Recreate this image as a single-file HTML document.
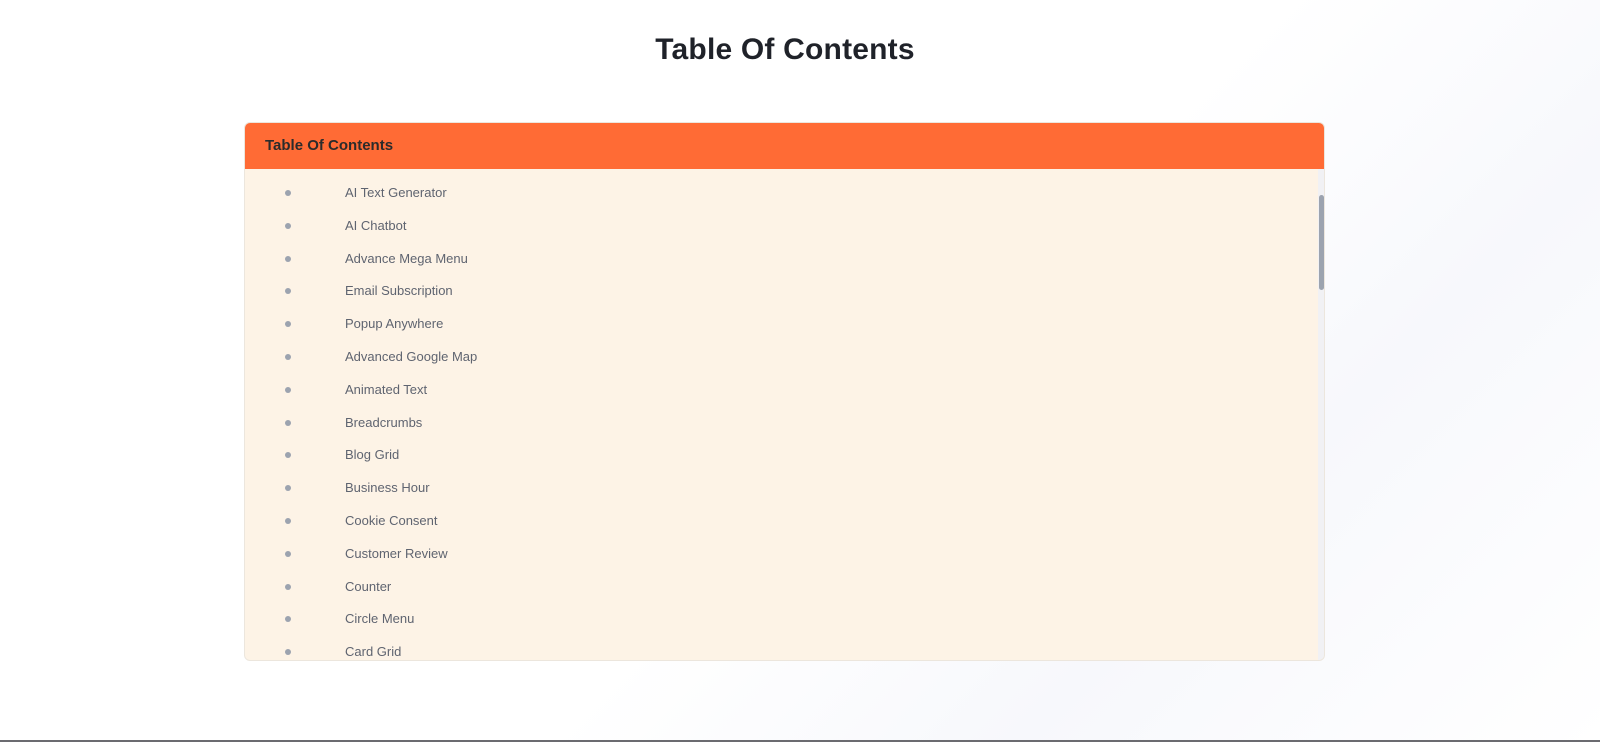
<!DOCTYPE html>
<html><head><meta charset="utf-8"><style>
html,body{margin:0;padding:0;width:1600px;height:742px;overflow:hidden;background:linear-gradient(135deg,#fff 55%,#f7f8fc 75%,#fff 100%);font-family:"Liberation Sans",sans-serif}
h1{position:absolute;top:33px;left:0;width:1570px;text-align:center;margin:0;font-size:30px;font-weight:bold;color:#1f2229;letter-spacing:0.2px}
.box{position:absolute;left:244px;top:122px;width:1081px;height:539px;border:1px solid #ece6dd;border-radius:6px;overflow:hidden;background:#fdf3e6;box-sizing:border-box}
.hd{height:46px;background:#ff6b35;color:#2b2b2b;font-weight:bold;font-size:15px;line-height:46px;padding-left:20px}
.track{position:absolute;right:0;top:46px;width:6px;bottom:0;background:#f1f1f4}
.thumb{position:absolute;right:0;top:72px;width:5px;height:95px;background:#9ca3af;border-radius:3px}
.it{position:absolute;left:100px;font-size:13px;color:#5f6470}
.dot{position:absolute;left:40px;width:6px;height:6px;border-radius:50%;background:#9ca3af}
.bot{position:absolute;left:0;top:740px;width:1600px;height:2px;background:#6b6b70}
</style></head><body>
<h1>Table Of Contents</h1>
<div class="box"><div class="hd">Table Of Contents</div>
<div class="track"></div><div class="thumb"></div>
<div id="l"></div>
</div>
<div class="bot"></div>
<script>
var n=["AI Text Generator","AI Chatbot","Advance Mega Menu","Email Subscription","Popup Anywhere","Advanced Google Map","Animated Text","Breadcrumbs","Blog Grid","Business Hour","Cookie Consent","Customer Review","Counter","Circle Menu","Card Grid"];
var h="";n.forEach(function(t,i){var y=70+i*32.8;h+='<div class="dot" style="top:'+(y-3)+'px"></div><div class="it" style="top:'+(y-8)+'px">'+t+'</div>';});
document.getElementById("l").innerHTML=h;
</script>
</body></html>
